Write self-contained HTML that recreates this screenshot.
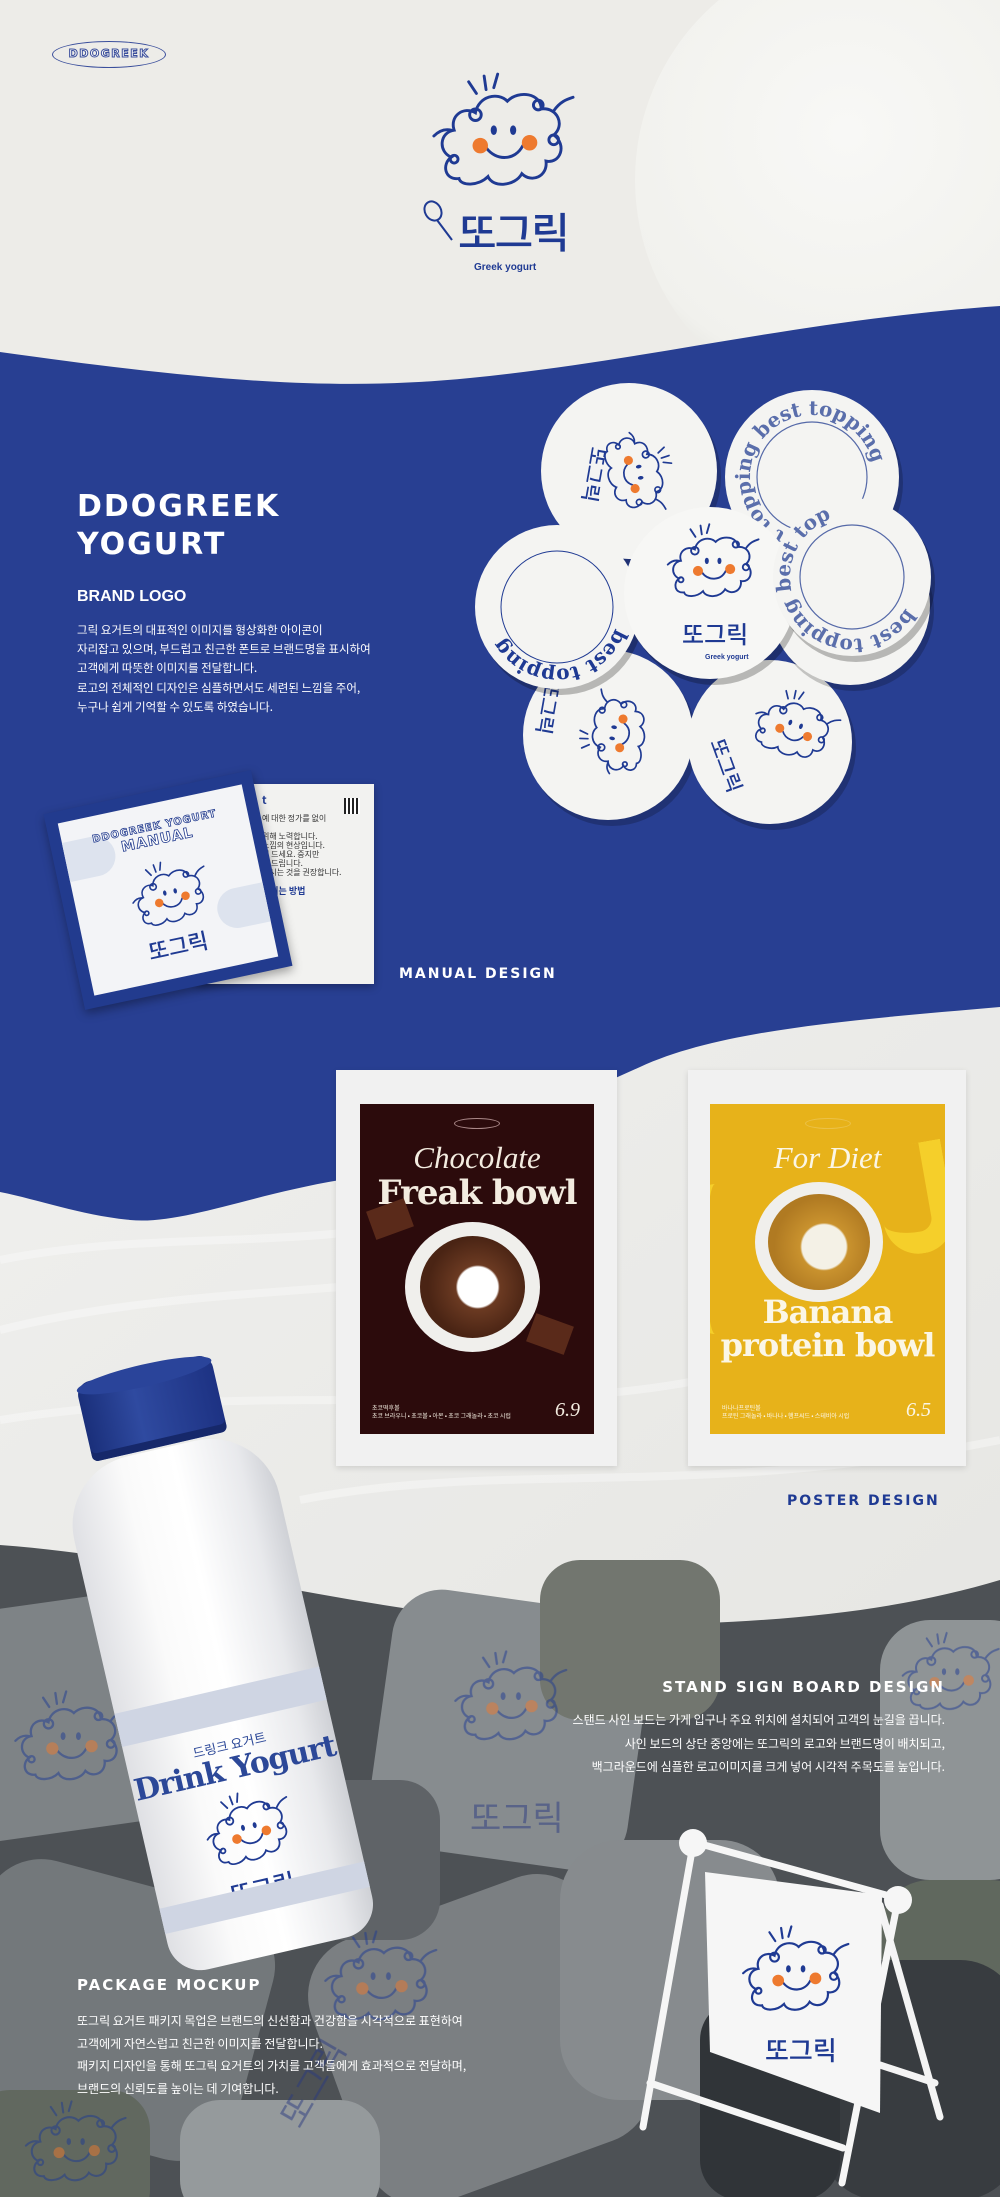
<!DOCTYPE html>
<html><head><meta charset="utf-8">
<style>
*{margin:0;padding:0;box-sizing:border-box}
body{width:1000px;height:2197px;position:relative;overflow:hidden;background:#efeeea;font-family:"Liberation Sans","Noto Sans CJK KR",sans-serif}
.abs{position:absolute}
.disp{font-family:"DejaVu Sans","Liberation Sans",sans-serif;font-weight:900;color:#fff;letter-spacing:2px}
.p{color:#fff;font-size:11.5px;line-height:19.2px;font-family:"Noto Sans CJK KR","Liberation Sans",sans-serif}
</style></head><body>
<svg class="abs" style="left:0;top:0" width="1000" height="2197" viewBox="0 0 1000 2197">
<defs>
<radialGradient id="scoop" cx="0.45" cy="0.4" r="0.6"><stop offset="0" stop-color="#f8f8f6"/><stop offset="0.85" stop-color="#f1f1ed"/><stop offset="1" stop-color="#e4e4df"/></radialGradient>
<linearGradient id="cream2" x1="0" y1="0" x2="1" y2="1"><stop offset="0" stop-color="#f0f0ee"/><stop offset="1" stop-color="#e6e6e3"/></linearGradient>
<symbol id="cloud" viewBox="0 0 150 130">
<g fill="none" stroke="#1f3a93" stroke-width="3" stroke-linecap="round">
<path d="M30,110 C15,112 12,95 22,88 C8,82 10,62 25,60 C20,45 35,35 47,42 C50,25 70,20 80,30 C92,18 115,22 115,38 C132,36 140,55 128,65 C142,75 135,95 120,92 C122,108 105,115 95,105 C88,118 65,120 60,108 C50,118 32,118 30,110 Z"/>
<circle cx="47" cy="44" r="6"/><circle cx="112" cy="34" r="5"/><circle cx="128" cy="70" r="5"/><circle cx="25" cy="90" r="4"/>
<path d="M128,40 C135,30 142,28 148,26"/><path d="M22,60 C14,58 8,62 4,66"/>
<path d="M48,22 L40,10 M58,18 L56,4 M66,16 L70,2"/>
<path d="M58,78 C68,92 88,92 96,76"/>
</g>
<ellipse cx="66" cy="60" rx="3.2" ry="5" fill="#1f3a93"/><ellipse cx="86" cy="60" rx="3.2" ry="5" fill="#1f3a93"/>
<circle cx="52" cy="76" r="8" fill="#ee7a2f"/><circle cx="103" cy="73" r="8" fill="#ee7a2f"/>
</symbol>
</defs>
<rect width="1000" height="2197" fill="#edece8"/>
<rect y="900" width="1000" height="800" fill="url(#cream2)"/>
<circle cx="870" cy="180" r="235" fill="url(#scoop)"/>
<g stroke="#ffffff" stroke-width="8" fill="none" opacity="0.35">
<path d="M0,1330 C200,1280 400,1300 600,1250"/><path d="M0,1420 C250,1380 500,1420 700,1380"/><path d="M300,1500 C500,1460 700,1500 1000,1440"/><path d="M0,1260 C150,1230 300,1250 420,1220"/>
</g>
<path d="M0,352 C200,380 330,392 470,378 C650,360 800,320 1000,306 L1000,1007 C850,1020 720,1030 640,1067 C520,1120 430,1170 340,1180 C250,1195 180,1225 130,1220 C80,1215 40,1200 0,1192 Z" fill="#283f92"/>
<path d="M0,1545 C200,1560 400,1625 600,1625 C780,1625 900,1610 1000,1580 L1000,2197 L0,2197 Z" fill="#4d5155"/>
<g>
<rect x="-60" y="1600" width="260" height="230" rx="40" fill="#7e8386" transform="rotate(-8 70 1715)"/>
<rect x="-40" y="1880" width="300" height="260" rx="60" fill="#73787b" transform="rotate(15 110 2010)"/>
<rect x="380" y="1600" width="260" height="260" rx="50" fill="#878c8f" transform="rotate(8 510 1730)"/>
<rect x="540" y="1560" width="180" height="160" rx="40" fill="#72766f"/>
<rect x="330" y="1900" width="300" height="280" rx="60" fill="#7b7f82" transform="rotate(-20 480 2040)"/>
<rect x="240" y="1780" width="200" height="160" rx="40" fill="#5f6367"/>
<rect x="560" y="1840" width="220" height="260" rx="60" fill="#878b8e"/>
<rect x="880" y="1620" width="160" height="260" rx="50" fill="#8f9496"/>
<rect x="880" y="1880" width="160" height="200" rx="50" fill="#60685e"/>
<rect x="820" y="1960" width="200" height="240" rx="60" fill="#383c40"/>
<rect x="700" y="2000" width="140" height="200" rx="40" fill="#303438"/>
<rect x="180" y="2100" width="200" height="120" rx="40" fill="#959a9c"/>
<rect x="-30" y="2090" width="180" height="140" rx="40" fill="#61685f"/>
</g>
<g opacity="0.5">
<use href="#cloud" x="10" y="1690" width="120" height="100"/>
<use href="#cloud" x="450" y="1650" width="120" height="100"/>
<use href="#cloud" x="320" y="1930" width="120" height="100"/>
<use href="#cloud" x="900" y="1630" width="100" height="90"/>
<use href="#cloud" x="20" y="2100" width="110" height="90"/>
</g>
<g fill="#2a3a80" opacity="0.5" font-family="Noto Sans CJK KR,sans-serif" font-size="34">
<text x="470" y="1830">또그릭</text>
<text x="300" y="2130" transform="rotate(-60 300 2130)">또그릭</text>
</g>
</svg>

<!-- top logo -->
<div class="abs" style="left:52px;top:41px;width:114px;height:27px;border:1.5px solid #3b4f9c;border-radius:50%;text-align:center;font:bold 11px 'DejaVu Sans',sans-serif;line-height:24px;color:#f7f7f7;-webkit-text-stroke:1px #3b4f9c;letter-spacing:1.5px">DDOGREEK</div>
<svg class="abs" style="left:430px;top:72px" width="145" height="126"><use href="#cloud" width="145" height="126"/></svg>
<svg class="abs" style="left:422px;top:200px" width="36" height="44"><g fill="none" stroke="#1f3a93" stroke-width="2"><ellipse cx="11" cy="11" rx="8" ry="10" transform="rotate(-30 11 11)"/><path d="M15,20 L30,40"/></g></svg>
<div class="abs" style="left:458px;top:210px;font:500 42px 'Noto Sans CJK KR',sans-serif;color:#1f3a93;letter-spacing:-2px;line-height:1">또그릭</div>
<div class="abs" style="left:474px;top:262px;font:bold 10px 'Liberation Sans',sans-serif;color:#1f3a93">Greek yogurt</div>

<!-- blue section texts -->
<div class="abs disp" style="left:77px;top:488px;font-size:30px;line-height:38px">DDOGREEK<br>YOGURT</div>
<div class="abs" style="left:77px;top:588px;font:bold 16px 'Liberation Sans',sans-serif;color:#fff">BRAND LOGO</div>
<div class="abs p" style="left:77px;top:621px">그릭 요거트의 대표적인 이미지를 형상화한 아이콘이<br>자리잡고 있으며, 부드럽고 친근한 폰트로 브랜드명을 표시하여<br>고객에게 따뜻한 이미지를 전달합니다.<br>로고의 전체적인 디자인은 심플하면서도 세련된 느낌을 주어,<br>누구나 쉽게 기억할 수 있도록 하였습니다.</div>

<!-- coasters -->
<svg class="abs" style="left:0;top:0" width="1000" height="900" viewBox="0 0 1000 900">
<defs>
<path id="arcA" d="M-62,0 A62,62 0 1,1 62,0 A62,62 0 1,1 -62,0"/>
</defs>
<g font-family="DejaVu Serif,Liberation Serif,serif" font-weight="bold">
<g transform="translate(629,471)"><circle r="88" fill="#000" opacity="0.2" cx="4" cy="6"/><circle r="88" fill="#f4f4f2"/><use href="#cloud" x="-40" y="-45" width="85" height="75" transform="rotate(80)"/><text x="-55" y="-10" font-family="Noto Sans CJK KR,sans-serif" font-weight="500" font-size="20" fill="#1f3a93" transform="rotate(100 -40 -10)">또그릭</text></g>
<g transform="translate(812,477)"><circle r="87" fill="#000" opacity="0.2" cx="4" cy="6"/><circle r="87" fill="#f4f4f2"/><circle r="55" fill="none" stroke="#5569a8" stroke-width="1.2"/><text font-size="20" fill="#5a6eab" transform="rotate(-100)"><textPath href="#arcA">best topping best topping</textPath></text></g>
<g transform="translate(608,735)"><circle r="85" fill="#000" opacity="0.2" cx="4" cy="6"/><circle r="85" fill="#f4f4f2"/><use href="#cloud" x="-40" y="-30" width="85" height="75" transform="rotate(-80)"/><text x="-70" y="-30" font-family="Noto Sans CJK KR,sans-serif" font-weight="500" font-size="20" fill="#1f3a93" transform="rotate(100 -55 -40)">또그릭</text></g>
<g transform="translate(770,742)"><circle r="82" fill="#000" opacity="0.2" cx="4" cy="6"/><circle r="82" fill="#f4f4f2"/><use href="#cloud" x="-25" y="-60" width="85" height="75" transform="rotate(20)"/><text x="-60" y="0" font-family="Noto Sans CJK KR,sans-serif" font-weight="500" font-size="20" fill="#1f3a93" transform="rotate(70 -60 0)">또그릭</text></g>
<g transform="translate(850,605)"><circle r="80" fill="#000" opacity="0.2" cx="4" cy="6"/><circle r="80" fill="#f4f4f2"/><text font-size="19" fill="#1f3a93" transform="rotate(40)"><textPath href="#arcA">best topping</textPath></text></g>
<g transform="translate(557,607)"><circle r="82" fill="#000" opacity="0.25" cx="4" cy="6"/><circle r="82" fill="#f4f4f2"/><circle r="56" fill="none" stroke="#1f3a93" stroke-width="1"/><text font-size="20" fill="#1f3a93" transform="rotate(-160)"><textPath href="#arcA">best topping</textPath></text></g>
<g transform="translate(710,593)"><circle r="86" fill="#000" opacity="0.25" cx="4" cy="6"/><circle r="86" fill="#f7f7f5"/><use href="#cloud" x="-45" y="-70" width="95" height="82"/><text x="-28" y="50" font-family="Noto Sans CJK KR,sans-serif" font-weight="500" font-size="24" fill="#1f3a93">또그릭</text><text x="-5" y="66" font-family="Liberation Sans,sans-serif" font-size="7" fill="#1f3a93">Greek yogurt</text></g>
<g transform="translate(852,577)"><circle r="79" fill="#000" opacity="0.25" cx="4" cy="6"/><circle r="79" fill="#f4f4f2"/><circle r="52" fill="none" stroke="#5569a8" stroke-width="1.2"/><text font-size="20" fill="#5a6eab" transform="rotate(-150)"><textPath href="#arcA">best topping best top</textPath></text></g>
</g>
</svg>

<!-- manual -->
<div class="abs" style="left:196px;top:784px;width:178px;height:200px;background:#f2f2f0;box-shadow:0 3px 8px rgba(0,0,0,.3);font:8px 'Noto Sans CJK KR',sans-serif;color:#333;padding:12px 0 0 66px;line-height:9px">
<div style="font-weight:bold;color:#1f3a93;font-size:11px">t</div>
<div style="position:absolute;right:14px;top:14px;width:16px;height:16px;background:repeating-linear-gradient(90deg,#222 0 2px,#fff 2px 4px)"></div>
<br>예 대한 정가를 없이<br><br>위해 노력합니다.<br>느낌의 현상입니다.<br>의 드세요. 중지만<br>에 드립니다.<br>드시는 것을 권장합니다.<br><br><span style="color:#1f3a93;font-weight:bold;font-size:9px">즐기는 방법</span></div>
<div class="abs" style="left:62px;top:790px;width:212px;height:200px;background:#223b8e;transform:rotate(-12deg);box-shadow:0 4px 10px rgba(0,0,0,.35)">
<div style="position:absolute;left:12px;top:12px;right:12px;bottom:12px;background:#f3f4f7;overflow:hidden">
<div style="position:absolute;left:-20px;top:20px;width:70px;height:40px;border-radius:20px;background:#dde3ee"></div>
<div style="position:absolute;right:-20px;top:100px;width:70px;height:40px;border-radius:20px;background:#dde3ee"></div>
<div style="position:absolute;left:0;right:0;top:18px;text-align:center;font:900 10px 'DejaVu Sans',sans-serif;color:#fff;-webkit-text-stroke:.8px #223b8e;letter-spacing:1px">DDOGREEK YOGURT<br><span style="font-size:14px">MANUAL</span></div>
<svg style="position:absolute;left:55px;top:58px" width="80" height="70"><use href="#cloud" width="80" height="70"/></svg>
<div style="position:absolute;left:62px;top:128px;font:500 22px 'Noto Sans CJK KR',sans-serif;color:#1f3a93">또그릭</div>
</div></div>
<div class="abs disp" style="left:399px;top:966px;font-size:14px">MANUAL DESIGN</div>

<!-- posters -->
<div class="abs" style="left:336px;top:1070px;width:281px;height:396px;background:#f1f1f1;box-shadow:0 2px 6px rgba(0,0,0,.12)"></div>
<div class="abs" style="left:360px;top:1104px;width:234px;height:330px;background:#2c0b0c;overflow:hidden;color:#f3ece0;text-align:center">
<div style="margin:14px auto 0;width:46px;height:11px;border:1px solid #a88;border-radius:50%"></div>
<div style="font:italic 300 31px 'Liberation Serif',serif;margin-top:12px;line-height:34px">Chocolate</div>
<div style="font:bold 34px 'DejaVu Serif','Liberation Serif',serif;line-height:36px;letter-spacing:-1px">Freak bowl</div>
<div style="position:absolute;left:45px;top:118px;width:135px;height:130px;border-radius:50%;background:#f0efec"></div>
<div style="position:absolute;left:60px;top:132px;width:105px;height:102px;border-radius:50%;background:radial-gradient(circle at 55% 50%,#fff 0 20px,#6b3a22 22px,#4a2414 50px)"></div>
<div style="position:absolute;left:10px;top:100px;width:40px;height:30px;background:#5a2a1a;transform:rotate(-20deg)"></div>
<div style="position:absolute;left:170px;top:215px;width:40px;height:30px;background:#5a2a1a;transform:rotate(20deg)"></div>
<div style="position:absolute;left:12px;bottom:14px;text-align:left;font:6px 'Noto Sans CJK KR',sans-serif;line-height:8px">초코떡후볼<br>초코 브라우니 • 초코볼 • 아몬 • 초코 그래놀라 • 초코 시럽</div>
<div style="position:absolute;right:14px;bottom:12px;font:italic 20px 'Liberation Serif',serif">6.9</div>
</div>
<div class="abs" style="left:688px;top:1070px;width:278px;height:396px;background:#f1f1f1;box-shadow:0 2px 6px rgba(0,0,0,.12)"></div>
<div class="abs" style="left:710px;top:1104px;width:235px;height:330px;background:#e7b21a;overflow:hidden;color:#fbf6e6;text-align:center">
<div style="margin:14px auto 0;width:46px;height:11px;border:1px solid #fff3;border-radius:50%"></div>
<div style="font:italic 300 31px 'Liberation Serif',serif;margin-top:12px;line-height:34px">For Diet</div>
<div style="position:absolute;left:170px;top:40px;width:70px;height:110px;border-radius:0 0 60px 60px;border-right:22px solid #f5cf2a;border-bottom:22px solid #f5cf2a;transform:rotate(-10deg)"></div>
<div style="position:absolute;left:-30px;top:80px;width:70px;height:150px;border-radius:50%;border-left:26px solid #f5cf2a"></div>
<div style="position:absolute;left:45px;top:78px;width:128px;height:120px;border-radius:50%;background:#f0efec"></div>
<div style="position:absolute;left:58px;top:90px;width:102px;height:96px;border-radius:50%;background:radial-gradient(circle at 55% 55%,#f4f1e6 0 22px,#c9922e 24px,#b07a22 50px)"></div>
<div style="position:absolute;left:0;right:0;top:192px;font:bold 32px 'DejaVu Serif','Liberation Serif',serif;line-height:33px;letter-spacing:-1px">Banana<br>protein bowl</div>
<div style="position:absolute;left:12px;bottom:14px;text-align:left;font:6px 'Noto Sans CJK KR',sans-serif;line-height:8px">바나나프로틴볼<br>프로틴 그래놀라 • 바나나 • 햄프씨드 • 스테비아 시럽</div>
<div style="position:absolute;right:14px;bottom:12px;font:italic 20px 'Liberation Serif',serif">6.5</div>
</div>
<div class="abs disp" style="left:787px;top:1493px;font-size:14px;color:#1f3a93">POSTER DESIGN</div>

<!-- bottle -->
<div class="abs" style="left:105px;top:1361px;width:210px;height:600px;transform:rotate(-13deg)">
<div style="position:absolute;left:36px;top:0;width:138px;height:80px;border-radius:14px 14px 6px 6px;background:linear-gradient(90deg,#1a2f7a,#2f4aa0 40%,#1d3283);box-shadow:inset 0 -8px 0 #16286a"></div>
<div style="position:absolute;left:36px;top:-4px;width:138px;height:22px;border-radius:50%;background:#2a449a"></div>
<div style="position:absolute;left:0;top:82px;width:210px;height:518px;border-radius:70px 70px 34px 34px;background:linear-gradient(90deg,#dfe0e4,#fafafa 30%,#ffffff 55%,#e8e9ec 85%,#cfd1d6)"></div>
<div style="position:absolute;left:0;top:330px;width:210px;height:34px;background:#cfd5e3"></div>
<div style="position:absolute;left:0;top:362px;width:210px;height:150px;text-align:center;color:#2c4898">
<div style="font:13px 'Noto Sans CJK KR',sans-serif;margin-top:14px">드링크 요거트</div>
<div style="font:bold 30px 'DejaVu Serif','Liberation Serif',serif;letter-spacing:-1px;line-height:32px">Drink Yogurt</div>
<svg width="90" height="80" style="margin-top:6px"><use href="#cloud" width="90" height="80"/></svg>
<div style="font:500 24px 'Noto Sans CJK KR',sans-serif;color:#1f3a93;margin-top:-4px">또그릭</div>
</div>
<div style="position:absolute;left:0;top:530px;width:210px;height:26px;background:#cfd5e3"></div>
</div>

<!-- stand sign -->
<svg class="abs" style="left:0;top:0" width="1000" height="2197" viewBox="0 0 1000 2197">
<g stroke="#f4f4f4" stroke-width="7" stroke-linecap="round" fill="none">
<path d="M880,1905 L940,2117"/><path d="M880,2065 L935,2083"/>
</g>
<polygon points="705,1872 882,1895 880,2113 710,2052" fill="#f6f6f6"/>
<svg x="740" y="1925" width="110" height="95" viewBox="0 0 150 130"><use href="#cloud" width="150" height="130"/></svg>
<text x="765" y="2060" font-family="Noto Sans CJK KR,sans-serif" font-weight="500" font-size="26" fill="#1f3a93">또그릭</text>
<g stroke="#f6f6f6" stroke-width="7" stroke-linecap="round" fill="none">
<path d="M693,1845 L643,2127"/><path d="M898,1900 L842,2183"/><path d="M697,1843 L893,1897"/><path d="M650,2083 L843,2148"/>
</g>
<circle cx="693" cy="1843" r="14" fill="#f6f6f6"/><circle cx="898" cy="1900" r="14" fill="#f6f6f6"/>
</svg>

<div class="abs disp" style="right:55px;top:1678px;font-size:15px">STAND SIGN BOARD DESIGN</div>
<div class="abs p" style="right:55px;top:1708px;text-align:right;font-size:12px;line-height:23.5px">스탠드 사인 보드는 가게 입구나 주요 위치에 설치되어 고객의 눈길을 끕니다.<br>사인 보드의 상단 중앙에는 또그릭의 로고와 브랜드명이 배치되고,<br>백그라운드에 심플한 로고이미지를  크게 넣어 시각적 주목도를 높입니다.</div>

<div class="abs disp" style="left:77px;top:1976px;font-size:15px">PACKAGE MOCKUP</div>
<div class="abs p" style="left:77px;top:2010px;font-size:12px;line-height:22.5px">또그릭 요거트 패키지 목업은 브랜드의 신선함과 건강함을 시각적으로 표현하여<br>고객에게 자연스럽고 친근한 이미지를 전달합니다.<br>패키지 디자인을 통해 또그릭 요거트의 가치를 고객들에게 효과적으로 전달하며,<br>브랜드의 신뢰도를 높이는 데 기여합니다.</div>
</body></html>
